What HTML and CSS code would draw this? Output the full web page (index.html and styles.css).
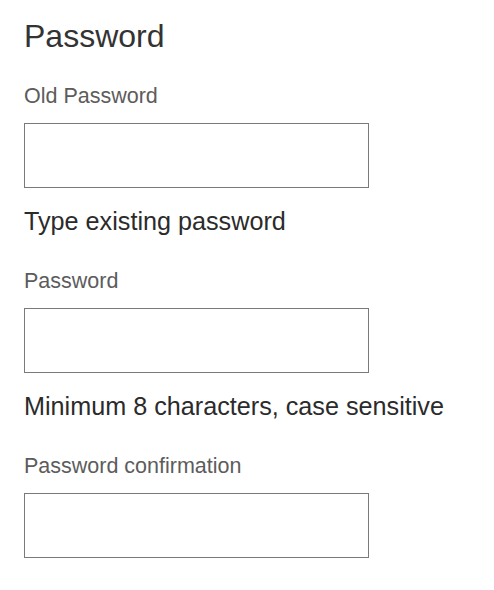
FILE: index.html
```html
<!DOCTYPE html>
<html lang="en">
<head>
<meta charset="utf-8">
<title>Password</title>
<link rel="stylesheet" href="styles.css">
</head>
<body>
<form class="form">
  <h1 class="title">Password</h1>
  <div class="field">
    <label class="label" for="old">Old Password</label>
    <input class="input" id="old" type="password">
    <p class="hint">Type existing password</p>
  </div>
  <div class="field">
    <label class="label" for="new">Password</label>
    <input class="input" id="new" type="password">
    <p class="hint">Minimum 8 characters, case sensitive</p>
  </div>
  <div class="field">
    <label class="label" for="conf">Password confirmation</label>
    <input class="input" id="conf" type="password">
  </div>
</form>
</body>
</html>
```
FILE: styles.css
```css
html, body {
  margin: 0;
  padding: 0;
  background: #fff;
}
body {
  font-family: "Liberation Sans", Arial, sans-serif;
}
.form {
  display: flex;
  flex-direction: column;
  padding: 18px 24px 0 24px;
}
.title {
  margin: 0;
  font-size: 32px;
  line-height: 36px;
  font-weight: 400;
  color: #333;
}
.field {
  display: flex;
  flex-direction: column;
  align-items: flex-start;
  margin-top: 30px;
}
.field + .field {
  margin-top: 34px;
}
.label {
  font-size: 21.5px;
  line-height: 24px;
  color: #5c5c5c;
}
.input {
  box-sizing: border-box;
  width: 345px;
  height: 65px;
  margin: 15px 0 0 0;
  border: 1px solid #7a7a7a;
  border-radius: 0;
  background: #fff;
  padding: 0 10px;
  font-size: 20px;
}
.hint {
  margin: 19px 0 0 0;
  font-size: 25.2px;
  line-height: 28px;
  color: #2b2b2b;
}
```
